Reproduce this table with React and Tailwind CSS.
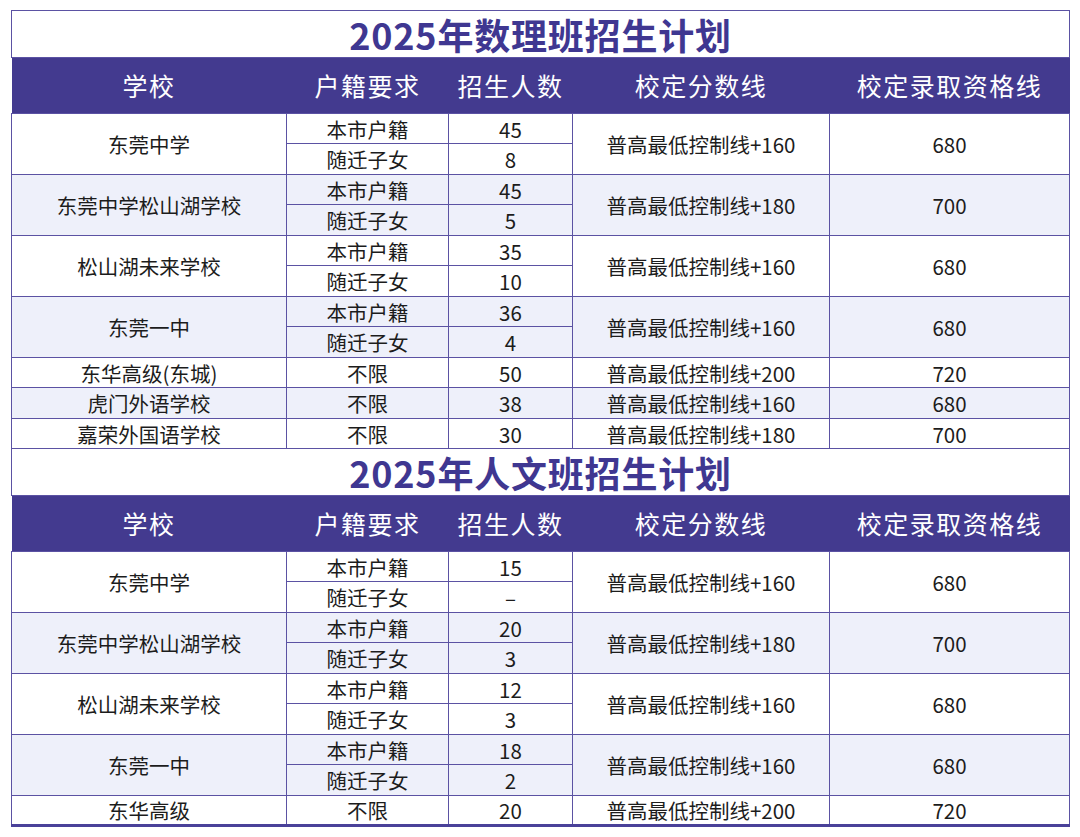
import React from "react";

const B = "border border-[#5b52a3]";

const t1 = [
  { name: "东莞中学", sub: [["本市户籍", "45"], ["随迁子女", "8"]], line: "普高最低控制线+160", q: "680" },
  { name: "东莞中学松山湖学校", sub: [["本市户籍", "45"], ["随迁子女", "5"]], line: "普高最低控制线+180", q: "700" },
  { name: "松山湖未来学校", sub: [["本市户籍", "35"], ["随迁子女", "10"]], line: "普高最低控制线+160", q: "680" },
  { name: "东莞一中", sub: [["本市户籍", "36"], ["随迁子女", "4"]], line: "普高最低控制线+160", q: "680" },
  { name: "东华高级(东城)", sub: [["不限", "50"]], line: "普高最低控制线+200", q: "720" },
  { name: "虎门外语学校", sub: [["不限", "38"]], line: "普高最低控制线+160", q: "680" },
  { name: "嘉荣外国语学校", sub: [["不限", "30"]], line: "普高最低控制线+180", q: "700" },
];

const t2 = [
  { name: "东莞中学", sub: [["本市户籍", "15"], ["随迁子女", "–"]], line: "普高最低控制线+160", q: "680" },
  { name: "东莞中学松山湖学校", sub: [["本市户籍", "20"], ["随迁子女", "3"]], line: "普高最低控制线+180", q: "700" },
  { name: "松山湖未来学校", sub: [["本市户籍", "12"], ["随迁子女", "3"]], line: "普高最低控制线+160", q: "680" },
  { name: "东莞一中", sub: [["本市户籍", "18"], ["随迁子女", "2"]], line: "普高最低控制线+160", q: "680" },
  { name: "东华高级", sub: [["不限", "20"]], line: "普高最低控制线+200", q: "720" },
];

function Title({ text, h }) {
  return (
    <tr className={h}>
      <td colSpan={5} className={`${B} text-center align-middle bg-white`}>
        <div className="text-[36px] font-semibold text-[#3f3791] leading-[40px] tracking-[0.8px]">{text}</div>
      </td>
    </tr>
  );
}

function Header({ h }) {
  const hs = ["学校", "户籍要求", "招生人数", "校定分数线", "校定录取资格线"];
  return (
    <tr className={`${h} bg-[#433a8f]`}>
      {hs.map((t) => (
        <td key={t} className="text-center align-middle text-white text-[25px] leading-none tracking-[1.5px] border-y border-[#5b52a3]">
          {t}
        </td>
      ))}
    </tr>
  );
}

function Rows({ data }) {
  return data.map((r, i) => {
    const bg = i % 2 === 1 ? "bg-[#eef0fa]" : "bg-white";
    const n = r.sub.length;
    return r.sub.map((s, j) => {
      const tall = n === 2 ? j === 1 : i % 2 === 1;
      return (
        <tr key={i + "-" + j} className={`${tall ? "h-[31px]" : "h-[30px]"} ${bg}`}>
          {j === 0 && (
            <td rowSpan={n} className={`${B} text-center align-middle`}>{r.name}</td>
          )}
          <td className={`${B} text-center align-middle`}>{s[0]}</td>
          <td className={`${B} text-center align-middle`}>{s[1]}</td>
          {j === 0 && (
            <td rowSpan={n} className={`${B} text-center align-middle`}>{r.line}</td>
          )}
          {j === 0 && (
            <td rowSpan={n} className={`${B} text-center align-middle`}>{r.q}</td>
          )}
        </tr>
      );
    });
  });
}

export default function App() {
  return (
    <div className="w-[1080px] h-[837px] bg-white pt-[10px] pl-[11px]" style={{ fontFamily: '"Noto Sans CJK SC", "Noto Sans", sans-serif' }}>
      <table className="w-[1058px] table-fixed border-collapse text-[20.5px] text-[#1c1c1c] leading-[20px] border-b-[3px] border-[#4a4199]">
        <colgroup>
          <col className="w-[275px]" />
          <col className="w-[162px]" />
          <col className="w-[124px]" />
          <col className="w-[257px]" />
          <col className="w-[240px]" />
        </colgroup>
        <tbody>
          <Title text="2025年数理班招生计划" h="h-[47px]" />
          <Header h="h-[56px]" />
          <Rows data={t1} />
          <Title text="2025年人文班招生计划" h="h-[47px]" />
          <Header h="h-[56px]" />
          <Rows data={t2} />
        </tbody>
      </table>
    </div>
  );
}
